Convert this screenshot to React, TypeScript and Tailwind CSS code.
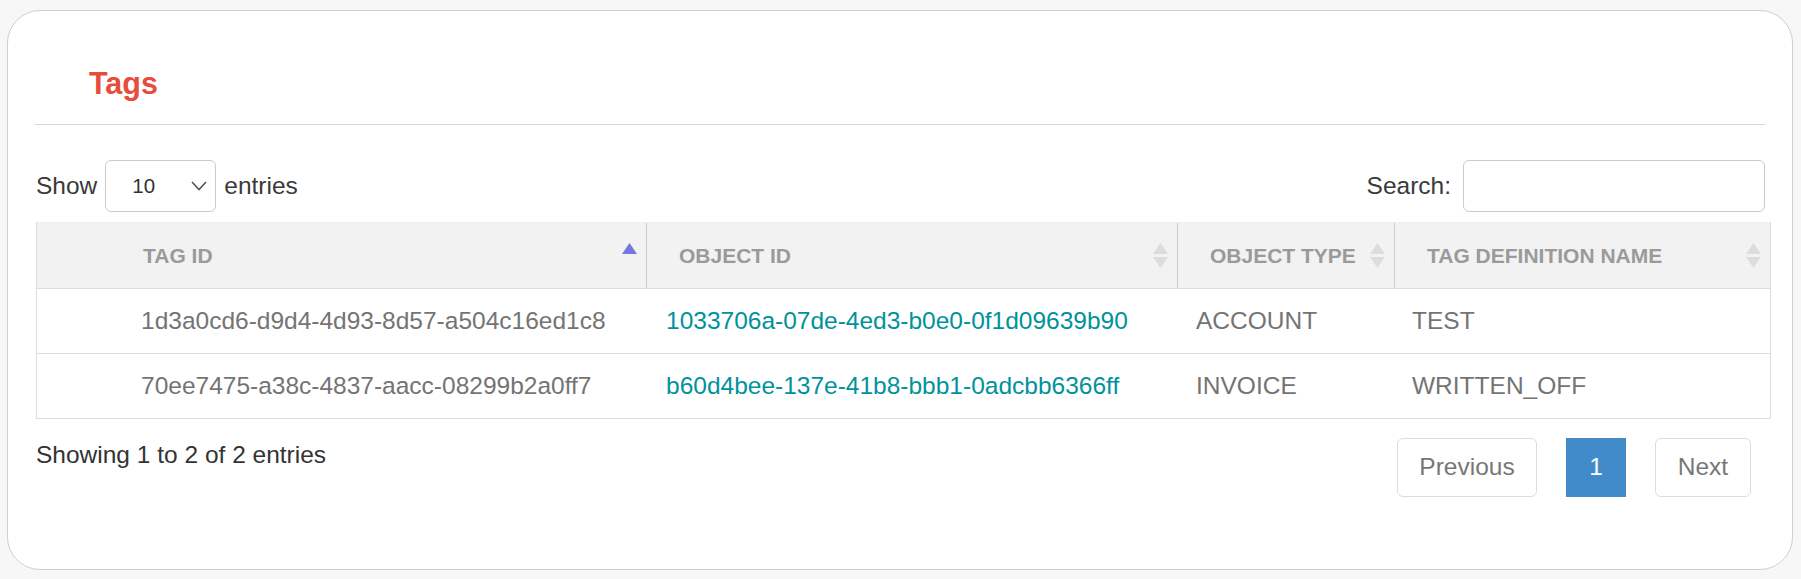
import { ReactNode } from 'react'

const columns = [
  { label: 'Tag ID', width: 'pl-[106px]', active: true },
  { label: 'Object ID', width: 'pl-[32px]', active: false },
  { label: 'Object Type', width: 'pl-[32px]', active: false },
  { label: 'Tag Definition Name', width: 'pl-[32px]', active: false },
]

const rows = [
  {
    tagId: '1d3a0cd6-d9d4-4d93-8d57-a504c16ed1c8',
    objectId: '1033706a-07de-4ed3-b0e0-0f1d09639b90',
    objectType: 'ACCOUNT',
    name: 'TEST',
  },
  {
    tagId: '70ee7475-a38c-4837-aacc-08299b2a0ff7',
    objectId: 'b60d4bee-137e-41b8-bbb1-0adcbb6366ff',
    objectType: 'INVOICE',
    name: 'WRITTEN_OFF',
  },
]

const grid = 'grid grid-cols-[609px_531px_217px_376px]'

function SortIcon({ active }: { active: boolean }) {
  return (
    <svg width="15" height="26" viewBox="0 0 15 26" className="shrink-0">
      <polygon points="7.5,0 15,11 0,11" fill={active ? '#7676dc' : '#dcdcdc'} />
      {!active && <polygon points="0,14 15,14 7.5,25" fill="#dcdcdc" />}
    </svg>
  )
}

function Cell({ children, className }: { children: ReactNode; className: string }) {
  return <div className={`flex items-center whitespace-nowrap ${className}`}>{children}</div>
}

export default function App() {
  return (
    <div className="h-[579px] w-full bg-[#f7f7f7] pl-[7px] pr-[8px] pt-[10px] font-['Liberation_Sans',Arial,sans-serif]">
      <div className="h-[560px] rounded-[33px] border border-[#cfcfcf] bg-white px-[27px]">
        <h2 className="pl-[54px] pt-[54px] text-[30.5px] font-bold leading-[36px] text-[#e74c3c]">Tags</h2>
        <div className="mt-[23px] border-t border-[#d6d6d6]" />

        <div className="mt-[35px] flex h-[52px] items-center justify-between pl-[1px] text-[24.5px] text-[#3a3a3a]">
          <div className="flex items-center gap-[8px]">
            <span>Show</span>
            <div className="flex h-[52px] w-[111px] items-center justify-between rounded-[6px] border border-[#cccccc] pl-[26px] pr-[8px] text-[20.5px] text-[#333]">
              <span>10</span>
              <svg width="16" height="10" viewBox="0 0 16 10">
                <polyline points="1,1 8,8.5 15,1" fill="none" stroke="#555" strokeWidth="1.6" />
              </svg>
            </div>
            <span>entries</span>
          </div>
          <div className="flex items-center gap-[12px]">
            <span>Search:</span>
            <div className="h-[52px] w-[302px] rounded-[6px] border border-[#cccccc]" />
          </div>
        </div>

        <div className="ml-[1px] mt-[10px] w-[1735px] border-x border-[#dddddd]">
          <div className={`${grid} h-[67px] border-y border-b-[#dddddd] border-t-[#eeeeee] bg-[#f2f2f2]`}>
            {columns.map((col, i) => (
              <div
                key={col.label}
                className={`flex items-center justify-between pr-[9px] ${col.width} ${i > 0 ? 'border-l border-[#cccccc]' : ''}`}
              >
                <span className="text-[21px] font-bold uppercase text-[#9a9a9a]">{col.label}</span>
                <SortIcon active={col.active} />
              </div>
            ))}
          </div>
          {rows.map((row) => (
            <div key={row.tagId} className={`${grid} h-[65px] border-b border-[#dddddd] text-[24.5px] text-[#747474]`}>
              <Cell className="pl-[104px]">{row.tagId}</Cell>
              <Cell className="pl-[20px] text-[#00929c]">{row.objectId}</Cell>
              <Cell className="pl-[19px]">{row.objectType}</Cell>
              <Cell className="pl-[18px]">{row.name}</Cell>
            </div>
          ))}
        </div>

        <div className="mt-[19px] flex items-start justify-between pl-[1px]">
          <p className="text-[24.5px] leading-[34px] text-[#333]">Showing 1 to 2 of 2 entries</p>
          <div className="mr-[14px] flex gap-[29px] text-[24.5px]">
            <button className="h-[59px] w-[140px] rounded-[6px] border border-[#dddddd] text-[#777]">Previous</button>
            <button className="h-[59px] w-[60px] bg-[#428bca] text-white">1</button>
            <button className="h-[59px] w-[96px] rounded-[6px] border border-[#dddddd] text-[#777]">Next</button>
          </div>
        </div>
      </div>
    </div>
  )
}
